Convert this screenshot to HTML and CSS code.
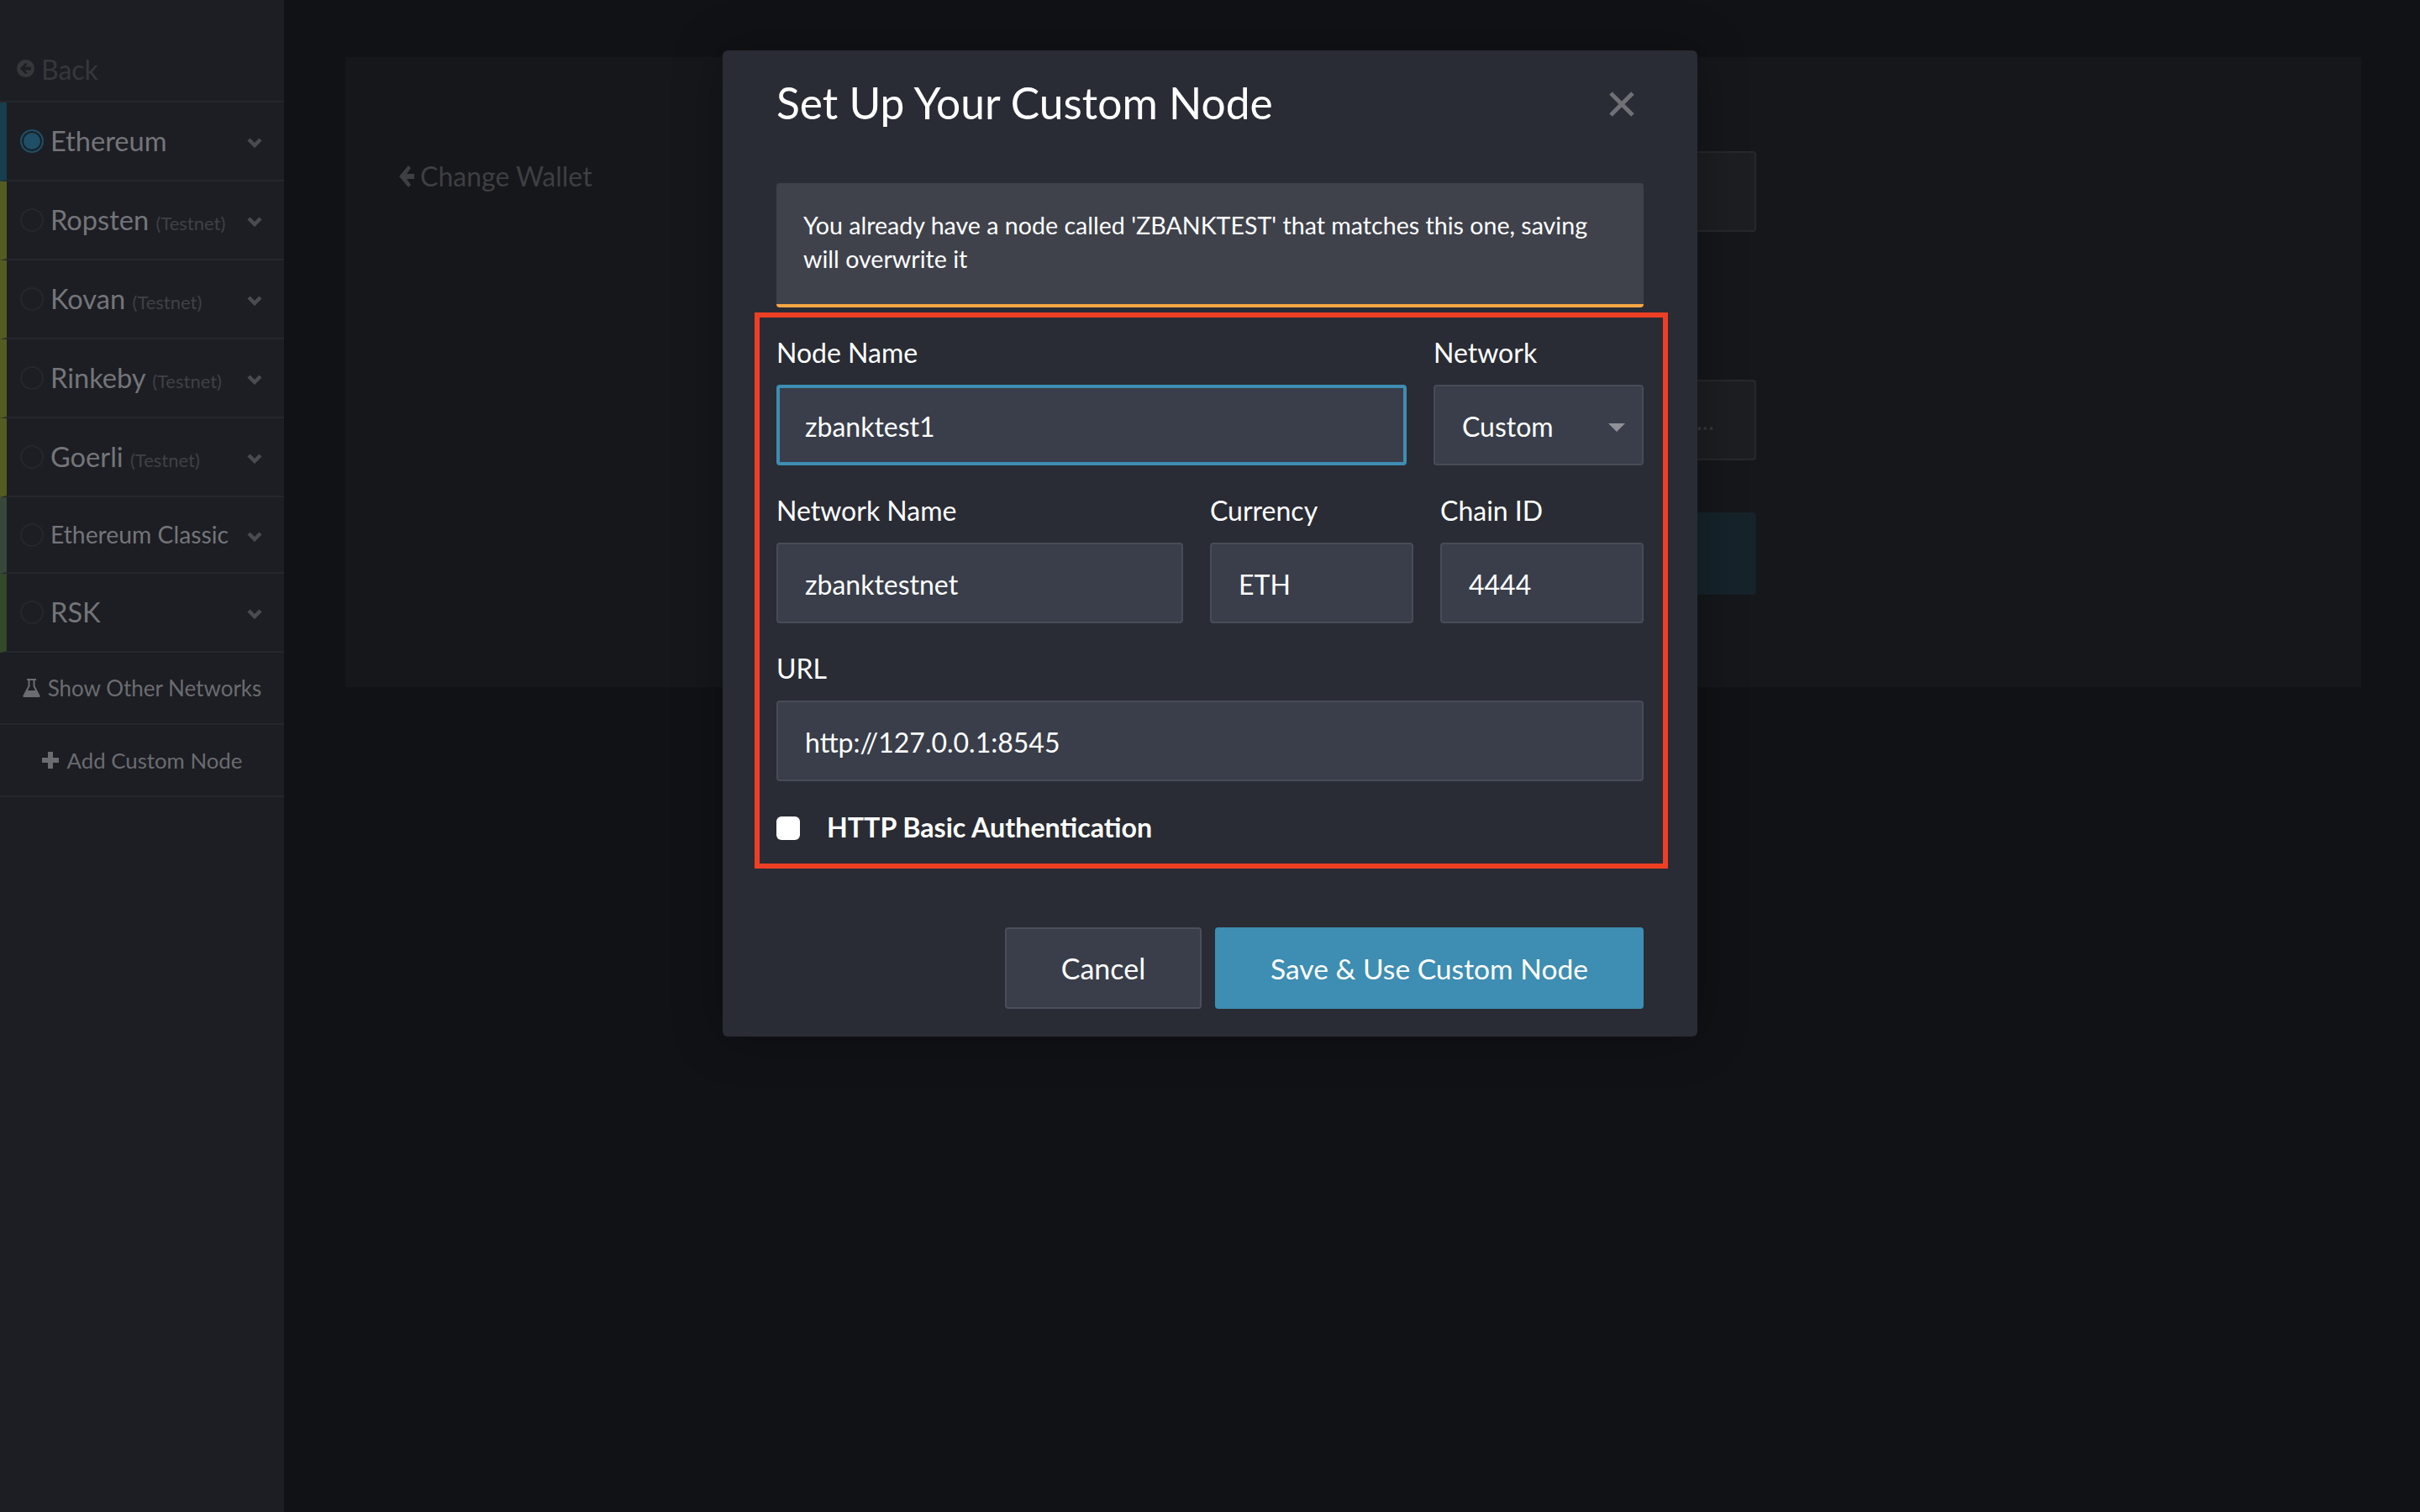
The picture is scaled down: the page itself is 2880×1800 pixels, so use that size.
FILE: index.html
```html
<!DOCTYPE html>
<html lang="en">
<head>
    <meta charset="UTF-8">
    <title>Set Up Your Custom Node</title>
    <link rel="stylesheet" href="styles.css">
</head>
<body>
    <aside class="sidebar">
        <div class="back">
            <svg class="back-icon" viewBox="0 0 20 20"><path fill-rule="evenodd" d="M10 0a10 10 0 1 0 0 20a10 10 0 1 0 0-20zM10 3.5l1.8 1.8-2.7 2.9h7v3.6h-7l2.7 2.9-1.8 1.8-6.3-6.5z"/></svg>
            Back
        </div>
        <div class="net net-eth">
            <span class="radio radio-on"></span>
            <span class="net-name">Ethereum</span>
            <svg class="chevron" viewBox="0 0 18 12"><path d="M2 2l7 7 7-7"/></svg>
        </div>
        <div class="net net-test">
            <span class="radio"></span>
            <span class="net-name">Ropsten <small>(Testnet)</small></span>
            <svg class="chevron" viewBox="0 0 18 12"><path d="M2 2l7 7 7-7"/></svg>
        </div>
        <div class="net net-test">
            <span class="radio"></span>
            <span class="net-name">Kovan <small>(Testnet)</small></span>
            <svg class="chevron" viewBox="0 0 18 12"><path d="M2 2l7 7 7-7"/></svg>
        </div>
        <div class="net net-test">
            <span class="radio"></span>
            <span class="net-name">Rinkeby <small>(Testnet)</small></span>
            <svg class="chevron" viewBox="0 0 18 12"><path d="M2 2l7 7 7-7"/></svg>
        </div>
        <div class="net net-test">
            <span class="radio"></span>
            <span class="net-name">Goerli <small>(Testnet)</small></span>
            <svg class="chevron" viewBox="0 0 18 12"><path d="M2 2l7 7 7-7"/></svg>
        </div>
        <div class="net net-etc">
            <span class="radio"></span>
            <span class="net-name net-name-long">Ethereum Classic</span>
            <svg class="chevron" viewBox="0 0 18 12"><path d="M2 2l7 7 7-7"/></svg>
        </div>
        <div class="net net-rsk">
            <span class="radio"></span>
            <span class="net-name">RSK</span>
            <svg class="chevron" viewBox="0 0 18 12"><path d="M2 2l7 7 7-7"/></svg>
        </div>
        <div class="side-link">
            <svg class="flask" viewBox="0 0 21 22"><path fill-rule="evenodd" d="M5 0h11v2h-1.500v6.500l6 11.500a1.300 1.300 0 0 1-1 2h-18a1.300 1.300 0 0 1-1-2l6-11.500v-6.500h-1.500zM8.500 2v7l-2.500 5h9l-2.500-5v-7z"/></svg>
            Show Other Networks
        </div>
        <div class="side-link side-link-add">
            <svg class="plus" viewBox="0 0 20 20"><path d="M7 0h6v7h7v6h-7v7h-6v-7h-7v-6h7z"/></svg>
            Add Custom Node
        </div>
    </aside>

    <main class="content">
        <section class="card">
            <div class="change-wallet">
                <svg class="arrow" viewBox="0 0 18 26"><path d="M11 0l3 3-5 7h9v6h-9l5 7-3 3-11-13z"/></svg>
                Change Wallet
            </div>
            <div class="ghost-col">
                <div class="ghost-field"></div>
                <div class="ghost-field ghost-field-two">...</div>
                <div class="ghost-btn"></div>
            </div>
        </section>
    </main>

    <div class="modal">
        <header class="modal-head">
            <h2>Set Up Your Custom Node</h2>
            <svg class="close" viewBox="0 0 30 30"><path d="M2 2l26 26M28 2l-26 26"/></svg>
        </header>

        <div class="alert">You already have a node called 'ZBANKTEST' that matches this one, saving will overwrite it</div>

        <form class="node-form">
            <div class="row">
                <label class="field field-grow">
                    <span class="label">Node Name</span>
                    <input class="input input-focus" type="text" value="zbanktest1">
                </label>
                <label class="field field-network">
                    <span class="label">Network</span>
                    <span class="select">Custom<i class="caret"></i></span>
                </label>
            </div>
            <div class="row">
                <label class="field field-grow">
                    <span class="label">Network Name</span>
                    <input class="input" type="text" value="zbanktestnet">
                </label>
                <label class="field field-small">
                    <span class="label">Currency</span>
                    <input class="input" type="text" value="ETH">
                </label>
                <label class="field field-small">
                    <span class="label">Chain ID</span>
                    <input class="input" type="text" value="4444">
                </label>
            </div>
            <div class="row">
                <label class="field field-grow">
                    <span class="label">URL</span>
                    <input class="input" type="text" value="http://127.0.0.1:8545">
                </label>
            </div>
            <label class="check">
                <input type="checkbox">
                <span>HTTP Basic Authentication</span>
            </label>
        </form>

        <footer class="modal-foot">
            <button class="btn btn-cancel" type="button">Cancel</button>
            <button class="btn btn-save" type="button">Save &amp; Use Custom Node</button>
        </footer>
    </div>
</body>
</html>
```

FILE: styles.css
```css
* { box-sizing: border-box; }
html, body { margin: 0; height: 100%; }
body { display: flex; height: 1800px; overflow: hidden; background: #101216; font-family: Lato, "Open Sans", sans-serif; color: #fff; }

/* sidebar */
.sidebar { width: 338px; flex: none; background: #1c1e23; color: #747579; }
.back { height: 122px; padding: 44px 0 0 20px; display: flex; align-items: center; gap: 8px; font-size: 32px; color: #35373b; border-bottom: 2px solid #25272c; }
.back-icon { width: 21px; height: 21px; fill: #35373b; margin-top: -2px; }
.net { height: 94px; display: flex; align-items: center; padding-left: 16px; padding-right: 26px; border-left: 8px solid #555c1f; border-bottom: 2px solid #25272c; }
.net-eth { border-left-color: #173e4d; }
.net-etc { height: 91px; border-left-color: #37483a; }
.net-rsk { border-left-color: #32492a; }
.radio { width: 28px; height: 28px; flex: none; margin-right: 8px; border: 2px solid #25272c; border-radius: 50%; }
.radio-on { border-color: #1e4f66; background: #1e4f66; box-shadow: inset 0 0 0 2px #1c1e23; }
.net-name { margin-top: -2px; font-size: 32.600px; white-space: nowrap; }
.net-name small { font-size: 22px; color: #3f4145; }
.net-name-long { font-size: 28.300px; }
.chevron { width: 18px; height: 12px; margin: 4px 0 0 auto; flex: none; fill: none; stroke: #4a4b4f; stroke-width: 4.500; }
.side-link { height: 86px; display: flex; align-items: center; justify-content: center; gap: 9px; font-size: 26px; color: #6b6c70; border-bottom: 2px solid #25272c; }
.side-link-add { font-size: 25.800px; gap: 10px; }
.flask { width: 21px; height: 22px; fill: #6b6c70; }
.plus { width: 20px; height: 20px; fill: #6b6c70; }

/* page behind the modal */
.content { flex: 1; padding: 68px 70px 0 73px; }
.card { height: 750px; display: flex; padding: 112px 0 0 64px; background: #15171a; }
.change-wallet { width: 470px; height: 95px; display: flex; align-items: center; gap: 7px; font-size: 32px; color: #3d3f43; margin-top: -18px; }
.arrow { width: 18px; height: 26px; fill: #3d3f43; }
.ghost-col { width: 1145px; }
.ghost-field { height: 96px; background: #1c1e22; border: 2px solid #26282d; border-radius: 4px; }
.ghost-field-two { margin-top: 176px; display: flex; align-items: center; justify-content: flex-end; padding: 0 48px 0 0; font-size: 30px; color: #35373b; }
.ghost-btn { height: 98px; margin-top: 62px; background: #16232a; border-radius: 4px; }

/* modal */
.modal { position: absolute; left: 860px; top: 60px; width: 1160px; height: 1174px; padding: 31px 64px 0; background: #292c34; border-radius: 6px; box-shadow: 0 0 60px rgba(0,0,0,0.3); }
.modal-head { display: flex; justify-content: space-between; height: 62px; }
.modal-head h2 { margin: 0; font-size: 51.500px; font-weight: 400; line-height: 62px; color: #fff; }
.close { width: 30px; height: 30px; margin: 18px 11px 0 0; fill: none; stroke: #6f7175; stroke-width: 5; }
.alert { margin-top: 65px; height: 148px; padding: 30px 32px 0; font-size: 28.600px; line-height: 40px; background: #3f424b; border-bottom: 4px solid #f5a742; border-radius: 4px; }

.node-form { margin: 6px -29px 0 -26px; padding: 22px 23px 28px 20px; border: 6px solid #ee3f24; }
.row { display: flex; gap: 32px; margin-bottom: 34px; }
.row:nth-child(3) { margin-bottom: 0; }
.field { display: block; }
.field-grow { flex: 1; }
.field-network { width: 250px; }
.field-small { width: 242px; }
.label { display: block; height: 40px; margin-bottom: 18px; font-size: 32px; line-height: 40px; white-space: nowrap; }
.input, .select { display: flex; align-items: center; width: 100%; height: 96px; padding: 2px 32px 0; font: 32px Lato, sans-serif; color: #fff; background: #393e4a; border: 2px solid #474c58; border-radius: 4px; outline: none; }
.input-focus { border: 4px solid #3e8db2; padding: 2px 30px 0; }
.select { position: relative; }
.caret { position: absolute; right: 20px; top: 44px; border-style: solid; border-width: 10px 10px 0; border-color: #8f9197 transparent transparent; }
.check { display: flex; align-items: center; gap: 32px; margin-top: 42px; font-size: 32.200px; line-height: 28px; font-weight: 700; }
.check span { margin-top: -2px; }
.check input { appearance: none; width: 28px; height: 28px; margin: 0; background: #fff; border-radius: 6px; }

.modal-foot { display: flex; justify-content: flex-end; gap: 16px; margin-top: 70px; }
.btn { height: 97px; font: 34px Lato, sans-serif; color: #fff; border-radius: 4px; }
.btn-cancel { width: 234px; background: #393e4a; border: 2px solid #4a4f5b; }
.btn-save { width: 510px; font-size: 33.600px; background: #3e8db2; border: none; }
```
